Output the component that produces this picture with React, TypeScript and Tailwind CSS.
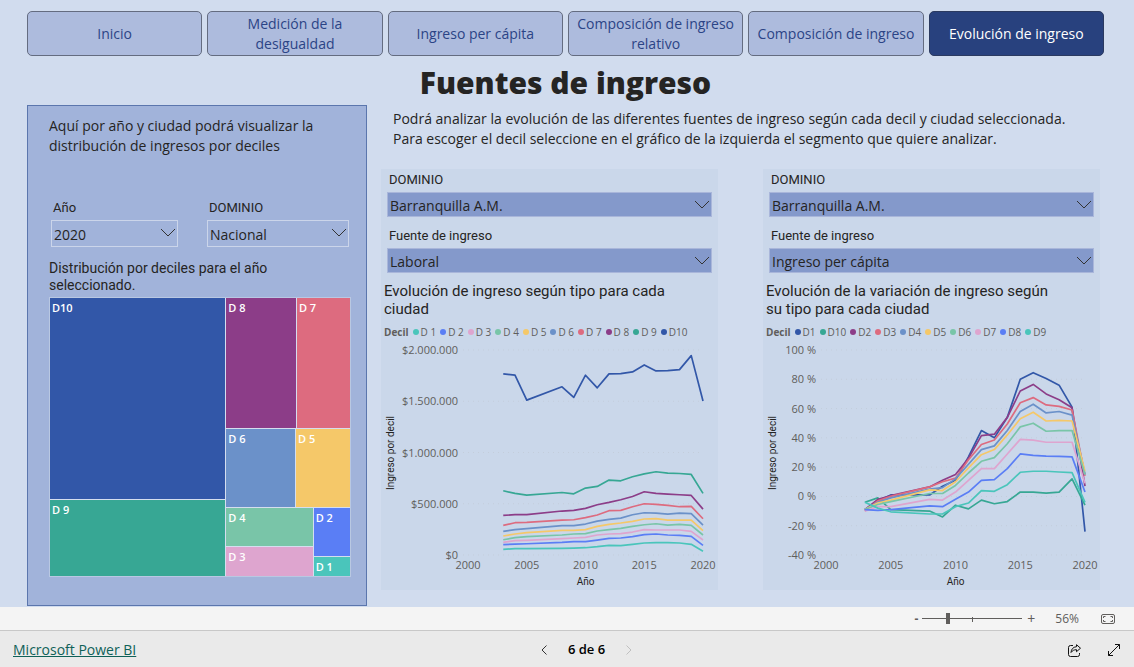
import React from 'react';

type Series = { name: string; color: string; values: number[] };
type Tick = { value: number; label: string };

const YEARS = [2003, 2004, 2005, 2008, 2009, 2010, 2011, 2012, 2013, 2014, 2015, 2016, 2017, 2018, 2019, 2020];

const TABS = [
  'Inicio',
  'Medición de la desigualdad',
  'Ingreso per cápita',
  'Composición de ingreso relativo',
  'Composición de ingreso',
  'Evolución de ingreso',
];

// values in thousands of pesos
const INCOME: Series[] = [
  { name: 'D 1', color: '#4ac5bb', values: [55, 62, 62, 65, 68, 71, 81, 94, 91, 104, 117, 120, 120, 117, 104, 36] },
  { name: 'D 2', color: '#5a7ef5', values: [101, 107, 110, 123, 130, 130, 146, 162, 166, 179, 198, 205, 195, 192, 182, 94] },
  { name: 'D 3', color: '#dea5cf', values: [123, 140, 143, 159, 166, 172, 195, 205, 208, 224, 247, 244, 244, 244, 231, 146] },
  { name: 'D 4', color: '#79c5a8', values: [149, 169, 179, 195, 205, 208, 234, 247, 260, 279, 295, 305, 292, 299, 289, 195] },
  { name: 'D 5', color: '#f5c869', values: [185, 205, 218, 240, 240, 247, 279, 299, 312, 328, 351, 354, 341, 341, 341, 237] },
  { name: 'D 6', color: '#6b91c9', values: [231, 247, 257, 286, 286, 302, 331, 347, 360, 393, 412, 409, 399, 409, 403, 292] },
  { name: 'D 7', color: '#dd6b7f', values: [289, 315, 318, 341, 344, 364, 390, 432, 435, 471, 500, 494, 484, 471, 474, 354] },
  { name: 'D 8', color: '#8c3d88', values: [386, 393, 393, 429, 435, 455, 490, 513, 539, 571, 617, 601, 594, 588, 581, 448] },
  { name: 'D 9', color: '#37a794', values: [627, 601, 584, 610, 597, 653, 669, 731, 724, 763, 792, 812, 799, 795, 786, 601] },
  { name: 'D10', color: '#3257a8', values: [1767, 1754, 1511, 1641, 1537, 1754, 1631, 1767, 1770, 1786, 1854, 1796, 1799, 1809, 1945, 1502] },
];

// accumulated variation, percent
const VARIATION: Series[] = [
  { name: 'D1', color: '#3257a8', values: [-9, -3, 1, 1, 7, 11, 27, 45, 40, 54, 80, 84.5, 80.5, 76, 61, -24] },
  { name: 'D10', color: '#37a794', values: [-4, -1, -9, -10, -14, -6, -8.5, -2.5, -5, -3.5, 3, 3, 2.3, 3, 12, -6] },
  { name: 'D2', color: '#8c3d88', values: [-9, -2, 0.5, 6.5, 11, 15, 26, 41.5, 42.5, 54, 72, 76.5, 70, 66, 60.5, 7] },
  { name: 'D3', color: '#dd6b7f', values: [-10, -3, 0, 6.5, 10, 12.5, 25, 35.5, 38.5, 49.5, 64, 67.5, 62.5, 61.5, 59, 14] },
  { name: 'D4', color: '#6b91c9', values: [-9, -4, -1, 5, 6, 12, 22, 32, 34.5, 45, 58, 63, 57, 58, 55.5, 15] },
  { name: 'D5', color: '#f5c869', values: [-9, -4.5, -2.5, 4.5, 4, 10, 19.5, 28.5, 32, 42, 53, 57.5, 51.5, 52, 51.5, 17] },
  { name: 'D6', color: '#79c5a8', values: [-9, -5.5, -3.5, 2, 2, 7.5, 16, 24, 26.5, 36, 47.5, 50, 44.5, 45, 45, 15] },
  { name: 'D7', color: '#dea5cf', values: [-10, -7, -7, -2, -2.5, 3, 11, 19, 19, 29, 39, 38.5, 37, 37, 37, 9] },
  { name: 'D8', color: '#5a7ef5', values: [-9, -9.5, -9, -6.5, -7, -2, 3, 11, 11.5, 19, 29, 28, 27.5, 27.3, 27, 3] },
  { name: 'D9', color: '#4ac5bb', values: [-4, -8, -10.5, -12, -12, -7, -4.5, 4, 3.5, 8, 16.5, 17.2, 17.2, 16.7, 16.3, -4] },
];

const INCOME_TICKS: Tick[] = [
  { value: 2000, label: '$2.000.000' },
  { value: 1500, label: '$1.500.000' },
  { value: 1000, label: '$1.000.000' },
  { value: 500, label: '$500.000' },
  { value: 0, label: '$0' },
];

const VARIATION_TICKS: Tick[] = [100, 80, 60, 40, 20, 0, -20, -40].map((value) => ({ value, label: `${value} %` }));

function Chevron({ className }: { className: string }) {
  return (
    <svg viewBox="0 0 16 9" className={className} fill="none" stroke="#333" strokeWidth="1" aria-hidden="true">
      <path d="M1 1l7 7 7-7" />
    </svg>
  );
}

function Slicer({ id, label, options, filled }: { id: string; label: string; options: string[]; filled?: boolean }) {
  return (
    <div className="flex flex-col">
      <label htmlFor={id} className="pl-0.5 font-['Roboto',sans-serif] text-[13px] leading-5 text-[#252423]">
        {label}
      </label>
      <div className="relative mt-0.5">
        <select
          id={id}
          className={`block w-full appearance-none rounded-none pt-0.5 pl-0.5 text-sm text-[#252423] outline-none ${
            filled ? 'h-[25px] border border-[#a9b6da] bg-[#8499cb]' : 'h-[27px] border border-[#cbd5ea] bg-transparent'
          }`}
        >
          {options.map((option) => (
            <option key={option}>{option}</option>
          ))}
        </select>
        <Chevron className="pointer-events-none absolute top-2 right-0.5 h-[9px] w-4" />
      </div>
    </div>
  );
}

function Cell({ name, className }: { name: string; className: string }) {
  return (
    <button className={`flex items-start overflow-hidden px-0.5 pt-0.5 text-left text-[11px] leading-4 font-semibold text-white ${className}`}>
      {name}
    </button>
  );
}

function Treemap() {
  return (
    <div className="grid h-[280px] grid-cols-[177fr_125fr] gap-px border border-[#b9c8e2] bg-[#d5deef]">
      <div className="grid grid-rows-[202fr_77fr] gap-px">
        <Cell name="D10" className="bg-[#3257a8]" />
        <Cell name="D 9" className="bg-[#37a794]" />
      </div>
      <div className="grid grid-rows-[131fr_79fr_69fr] gap-px">
        <div className="grid grid-cols-[71fr_54fr] gap-px">
          <Cell name="D 8" className="bg-[#8c3d88]" />
          <Cell name="D 7" className="bg-[#dd6b7f]" />
        </div>
        <div className="grid grid-cols-[70fr_55fr] gap-px">
          <Cell name="D 6" className="bg-[#6b91c9]" />
          <Cell name="D 5" className="bg-[#f5c869]" />
        </div>
        <div className="grid grid-cols-[88fr_37fr] gap-px">
          <div className="grid grid-rows-[39fr_30fr] gap-px">
            <Cell name="D 4" className="bg-[#79c5a8]" />
            <Cell name="D 3" className="bg-[#dea5cf]" />
          </div>
          <div className="grid grid-rows-[49fr_20fr] gap-px">
            <Cell name="D 2" className="bg-[#5a7ef5]" />
            <Cell name="D 1" className="bg-[#4ac5bb]" />
          </div>
        </div>
      </div>
    </div>
  );
}

function Legend({ series }: { series: Series[] }) {
  return (
    <div className="flex h-4 items-center gap-1 pl-[3px] text-[10px] text-[#605e5c]">
      <span className="font-bold">Decil</span>
      {series.map((s) => (
        <span key={s.name} className="flex items-center gap-0.5 whitespace-nowrap">
          <i className="size-1.5 rounded-full" style={{ backgroundColor: s.color }} />
          {s.name}
        </span>
      ))}
    </div>
  );
}

function LineChart({ series, ticks, x0, x1 }: { series: Series[]; ticks: Tick[]; x0: number; x1: number }) {
  const max = ticks[0].value;
  const min = ticks[ticks.length - 1].value;
  const x = (year: number) => x0 + ((year - 2000) / 20) * (x1 - x0);
  const y = (value: number) => 10 + ((max - value) / (max - min)) * 205;

  return (
    <svg viewBox="0 0 337 250" className="block w-full font-['Open_Sans',sans-serif]" role="img">
      {ticks.map((tick) => (
        <g key={tick.label}>
          <line x1={x0 - 5} x2={x1} y1={y(tick.value)} y2={y(tick.value)} stroke="#c3cddb" strokeDasharray="1 4" />
          <text x={x0 - 10} y={y(tick.value) + 4} textAnchor="end" fontSize="11" fill="#605e5c">
            {tick.label}
          </text>
        </g>
      ))}
      {[2000, 2005, 2010, 2015, 2020].map((year) => (
        <text key={year} x={x(year)} y="229" textAnchor="middle" fontSize="11" fill="#605e5c">
          {year}
        </text>
      ))}
      {series.map((s) => (
        <polyline
          key={s.name}
          points={s.values.map((v, i) => `${x(YEARS[i])},${y(v)}`).join(' ')}
          fill="none"
          stroke={s.color}
          strokeWidth="1.7"
          strokeLinejoin="round"
        />
      ))}
      <g className="font-['Roboto',sans-serif]" fontSize="10" fill="#252423" textAnchor="middle">
        <text x={(x0 + x1) / 2} y="245">
          Año
        </text>
        <text transform="translate(13 113) rotate(-90)">Ingreso por decil</text>
      </g>
    </svg>
  );
}

function Card({ id, source, title, children }: { id: string; source: string; title: string; children: React.ReactNode }) {
  return (
    <section className="bg-[#cad7ea] pt-px">
      <div className="flex flex-col gap-[9px] px-1.5">
        <Slicer id={`${id}-dominio`} label="DOMINIO" options={['Barranquilla A.M.', 'Nacional']} filled />
        <Slicer id={`${id}-fuente`} label="Fuente de ingreso" options={[source]} filled />
      </div>
      <h2 className="mt-[9px] mr-[38px] ml-[3px] font-['Roboto',sans-serif] text-[15px] leading-[18px] text-[#252423]">{title}</h2>
      <div className="mt-1.5">{children}</div>
    </section>
  );
}

export default function App() {
  const [active, setActive] = React.useState(5);

  return (
    <div className="flex min-h-screen flex-col bg-[#d1dcee] font-['Open_Sans',sans-serif]">
      <main className="flex-1 pr-[30px] pb-px pl-[27px]">
        <nav className="grid grid-cols-6 gap-[5px] pt-[11px]">
          {TABS.map((tab, i) => (
            <button
              key={tab}
              onClick={() => setActive(i)}
              className={`h-[45px] rounded-[5px] border px-1 text-sm leading-5 ${
                i === active ? 'border-[#2b3a60] bg-[#28417e] text-white' : 'border-[#646c80] bg-[#adbbdd] text-[#2b4486]'
              }`}
            >
              {tab}
            </button>
          ))}
        </nav>
        <h1 className="mt-[5px] mb-px text-center text-[30px] leading-[43px] font-extrabold text-[#252423]">Fuentes de ingreso</h1>

        <div className="grid grid-cols-[340fr_723fr] gap-[14px]">
          <aside className="border border-[#5b76ad] bg-[#a1b3da] pt-2.5 pr-[15px] pl-[21px]">
            <p className="mr-4 text-sm leading-5 text-[#252423]">
              Aquí por año y ciudad podrá visualizar la distribución de ingresos por deciles
            </p>
            <div className="mt-[42px] mr-0.5 ml-0.5 grid grid-cols-[127fr_142fr] gap-[29px]">
              <Slicer id="anio" label="Año" options={['2020', '2019', '2018']} />
              <Slicer id="dominio" label="DOMINIO" options={['Nacional', 'Barranquilla A.M.']} />
            </div>
            <h2 className="mt-[13px] mr-12 mb-[3px] font-['Roboto',sans-serif] text-sm leading-[17px] text-[#252423]">
              Distribución por deciles para el año seleccionado.
            </h2>
            <Treemap />
          </aside>

          <div>
            <p className="mt-1 ml-3 text-sm leading-5 text-[#252423]">
              Podrá analizar la evolución de las diferentes fuentes de ingreso según cada decil y ciudad seleccionada.
              <br />
              Para escoger el decil seleccione en el gráfico de la izquierda el segmento que quiere analizar.
            </p>
            <div className="mt-5 mr-1 grid grid-cols-2 gap-[45px] pb-4">
              <Card id="ingreso" source="Laboral" title="Evolución de ingreso según tipo para cada ciudad">
                <Legend series={INCOME} />
                <LineChart series={INCOME} ticks={INCOME_TICKS} x0={87} x1={322} />
              </Card>
              <Card id="variacion" source="Ingreso per cápita" title="Evolución de la variación de ingreso según su tipo para cada ciudad">
                <Legend series={VARIATION} />
                <LineChart series={VARIATION} ticks={VARIATION_TICKS} x0={63} x1={322} />
              </Card>
            </div>
          </div>
        </div>
      </main>

      <div className="flex h-[23px] items-center justify-end bg-[#f4f4f4] pr-[19px] text-xs text-[#605e5c]">
        <button aria-label="Alejar" className="font-bold">-</button>
        <div className="relative mr-[5px] ml-1 flex h-3 w-[100px] items-center">
          <input
            type="range"
            aria-label="Zoom"
            defaultValue={25}
            className="h-3 w-full appearance-none bg-[linear-gradient(#605e5c,#605e5c)] bg-[length:100%_1px] bg-center bg-no-repeat [&::-webkit-slider-thumb]:h-[11px] [&::-webkit-slider-thumb]:w-1 [&::-webkit-slider-thumb]:appearance-none [&::-webkit-slider-thumb]:bg-[#605e5c]"
          />
          <span className="pointer-events-none absolute top-1 left-1/2 h-[5px] w-px bg-[#605e5c]" />
        </div>
        <button aria-label="Acercar" className="text-sm">+</button>
        <span className="mr-[22px] ml-5">56%</span>
        <button aria-label="Ajustar a la página">
          <svg viewBox="0 0 14 10" className="h-2.5 w-3.5" fill="none" stroke="#605e5c">
            <rect x="0.5" y="0.5" width="13" height="9" rx="1.5" />
            <path d="M2.5 4V2.5H4.5M9.5 2.5h2V4M11.5 6v1.5h-2M4.5 7.5h-2V6" />
          </svg>
        </button>
      </div>

      <footer className="grid h-[37px] grid-cols-3 items-center border-t border-[#c8c8c8] bg-[#eaeaea] pt-0.5 pr-[14px] pl-[13px] text-[13px]">
        <a href="#powerbi" className="text-sm text-[#0f6158] underline">
          Microsoft Power BI
        </a>
        <div className="flex items-center justify-center gap-[21px] pl-10">
          <button aria-label="Página anterior">
            <svg viewBox="0 0 6 10" className="h-2.5 w-1.5" fill="none" stroke="#333">
              <path d="M5.5 0.5L1 5l4.5 4.5" />
            </svg>
          </button>
          <span className="font-semibold text-black">6 de 6</span>
          <button aria-label="Página siguiente">
            <svg viewBox="0 0 6 10" className="h-2.5 w-1.5" fill="none" stroke="#c0c0c0">
              <path d="M0.5 0.5L5 5 0.5 9.5" />
            </svg>
          </button>
        </div>
        <div className="flex items-center justify-end gap-[27px]">
          <button aria-label="Compartir">
            <svg viewBox="0 0 13 13" className="size-[13px]" fill="none" stroke="#111" strokeLinejoin="round">
              <path d="M5 1.5H2.5a2 2 0 0 0-2 2v7a2 2 0 0 0 2 2h7a2 2 0 0 0 2-2V9" />
              <path d="M8.5 0.7L12.5 4.2 8.5 7.7V5.7C6 5.7 4.5 6.5 3 8.5 3.3 5.2 5 3 8.5 2.7z" />
            </svg>
          </button>
          <button aria-label="Pantalla completa">
            <svg viewBox="0 0 12 12" className="size-3" fill="none" stroke="#111">
              <path d="M7 0.5h4.5V5M5 11.5H0.5V7M11.5 0.5l-11 11" />
            </svg>
          </button>
        </div>
      </footer>
    </div>
  );
}
